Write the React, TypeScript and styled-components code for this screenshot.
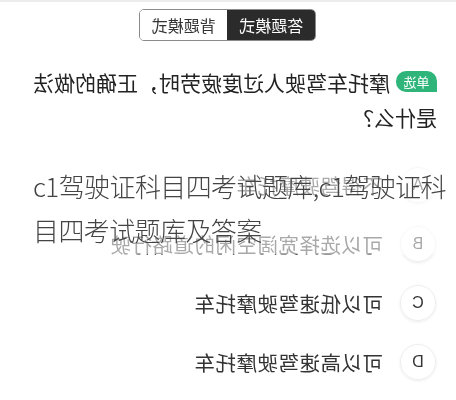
import styled, { createGlobalStyle } from 'styled-components';

const GlobalStyle = createGlobalStyle`
  body {
    margin: 0;
    background: #fff;
    font-family: "Noto Sans CJK SC", "Noto Sans", sans-serif;
  }
`;

const Page = styled.div`
  position: relative;
  width: 456px;
  height: 400px;
  overflow: hidden;
  background: #fff;
`;

// the screenshot is a mirror image of the app
const Screen = styled.div`
  width: 456px;
  height: 400px;
  transform: scaleX(-1);
  border-top: 2px solid #ececec;
  box-sizing: border-box;
`;

const Toggle = styled.div`
  display: flex;
  width: 177px;
  height: 32px;
  margin: 7px 0 0 140px;
  border: 1px solid #8a8a8a;
  border-radius: 5px;
  overflow: hidden;
  box-sizing: border-box;
`;

const ToggleItem = styled.div<{ $active?: boolean }>`
  flex: 1;
  display: flex;
  align-items: center;
  justify-content: center;
  font-size: 16px;
  background: ${p => (p.$active ? '#2b2b2b' : '#fff')};
  color: ${p => (p.$active ? '#fff' : '#333')};
`;

const Question = styled.div`
  margin-top: 24px;
  padding: 0 19px;
  font-size: 21px;
  line-height: 35px;
  color: #222;
`;

const Badge = styled.span`
  display: inline-block;
  width: 41px;
  height: 21px;
  margin-right: 6px;
  border-radius: 10px 10px 10px 0;
  background: #2fb57a;
  color: #fff;
  font-size: 13px;
  line-height: 21px;
  text-align: center;
  vertical-align: 4px;
`;

const Options = styled.div`
  margin-top: 20px;
`;

const Option = styled.div`
  display: flex;
  align-items: center;
  gap: 17px;
  height: 59px;
  padding-left: 20px;
`;

const Letter = styled.div`
  width: 34px;
  height: 34px;
  border-radius: 50%;
  border: 1px solid #ededed;
  box-shadow: 0 1px 3px rgba(0, 0, 0, 0.08);
  display: flex;
  align-items: center;
  justify-content: center;
  font-family: "Liberation Sans", sans-serif;
  font-size: 16px;
  color: #333;
`;

const OptionText = styled.div`
  font-size: 20.5px;
  color: #333;
  letter-spacing: 0.5px;
`;

const Title = styled.div`
  position: absolute;
  top: 150px;
  left: 0;
  width: 460px;
  height: 104px;
  box-sizing: border-box;
  padding: 14px 0 0 33px;
  background: rgba(255, 255, 255, 0.58);
  font-size: 26px;
  line-height: 44px;
  letter-spacing: -0.6px;
  color: #444;
  font-weight: 300;
`;

const options = [
  ['A', '不得驾驶摩托车'],
  ['B', '可以选择宽阔空闲的道路行驶'],
  ['C', '可以低速驾驶摩托车'],
  ['D', '可以高速驾驶摩托车'],
];

export default function App() {
  return (
    <Page>
      <GlobalStyle />
      <Screen>
        <Toggle>
          <ToggleItem $active>答题模式</ToggleItem>
          <ToggleItem>背题模式</ToggleItem>
        </Toggle>
        <Question>
          <Badge>单选</Badge>
          摩托车驾驶人过度疲劳时，正确的做法是什么？
        </Question>
        <Options>
          {options.map(([k, t]) => (
            <Option key={k}>
              <Letter>{k}</Letter>
              <OptionText>{t}</OptionText>
            </Option>
          ))}
        </Options>
      </Screen>
      <Title>c1驾驶证科目四考试题库,c1驾驶证科目四考试题库及答案</Title>
    </Page>
  );
}
